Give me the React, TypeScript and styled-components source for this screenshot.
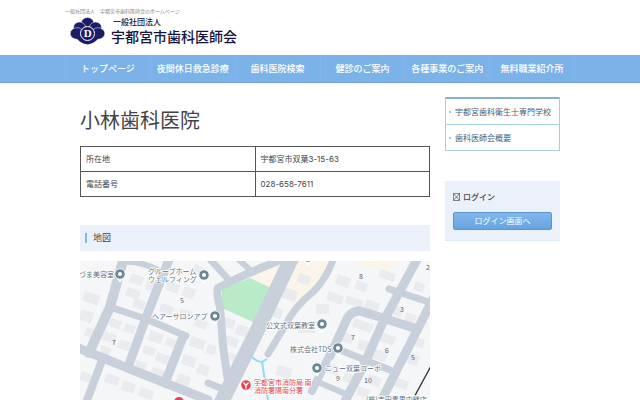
import React from "react";
import styled, { createGlobalStyle } from "styled-components";

const Global = createGlobalStyle`
  * { box-sizing: border-box; }
  body {
    margin: 0;
    background: #fff;
    color: #444;
    font-family: "Noto Sans CJK JP", sans-serif;
    font-size: 9px;
    line-height: 16px;
  }
`;

const Container = styled.div<{ $max: number }>`
  width: 100%;
  max-width: ${(p) => p.$max}px;
  margin: 0 auto;
`;

const Tagline = styled.p`
  margin: 0;
  padding-top: 7px;
  font-size: 5px;
  line-height: 8px;
  color: #888;
`;

const Brand = styled.a`
  display: flex;
  align-items: center;
  gap: 6px;
  height: 40px;
  padding: 0 0 9px 5px;
  color: #14143c;
  text-decoration: none;
`;

const BrandText = styled.span`
  display: flex;
  flex-direction: column;
  font-weight: 500;
`;

const BrandSmall = styled.span`
  padding-left: 2px;
  font-size: 8px;
  line-height: 10px;
`;

const BrandName = styled.span`
  font-size: 14px;
  line-height: 18px;
`;

const Nav = styled.nav`
  background: #7bb2e8;
  border-bottom: 1px solid #6fa5dc;
`;

const NavList = styled.ul`
  display: grid;
  grid-template-columns: repeat(6, minmax(0, 1fr));
  margin: 0;
  padding: 0;
  list-style: none;
  border-left: 1px solid #83b7ea;
`;

const NavItem = styled.li`
  padding: 0 6px;
  border-right: 1px solid #83b7ea;
`;

const NavLink = styled.a`
  display: block;
  overflow: hidden;
  color: #fff;
  font-size: 9px;
  font-weight: 500;
  line-height: 27px;
  text-align: center;
  text-decoration: none;
  white-space: nowrap;
`;

const Columns = styled(Container)`
  display: grid;
  grid-template-columns: minmax(0, 1fr) 115px;
  gap: 15px;
  align-items: start;
  padding-top: 14px;
`;

const Title = styled.h1`
  margin: 9px 0 12px;
  color: #444;
  font-size: 20px;
  font-weight: 400;
  line-height: 28px;
`;

const Table = styled.table`
  width: 100%;
  table-layout: fixed;
  border-collapse: collapse;
  font-family: Inter, "Noto Sans CJK JP", sans-serif;
  font-size: 8px;
  line-height: 14px;
`;

const cell = `
  height: 25px;
  padding: 5px;
  border: 1px solid #555;
  text-align: left;
  font-weight: 400;
`;
const HeadCell = styled.th`${cell}`;
const DataCell = styled.td`${cell}`;

const SectionTitle = styled.h2`
  display: flex;
  align-items: center;
  gap: 6px;
  height: 26px;
  margin: 28px 0 10px;
  padding-left: 5px;
  background: #eaf1fb;
  font-size: 9px;
  font-weight: 400;
  &::before {
    content: "";
    width: 2px;
    height: 10px;
    background: #7db8e0;
  }
`;

const MapDrawing = styled.svg`
  display: block;
  width: 100%;
  height: auto;
  font-family: "Noto Sans CJK JP", sans-serif;
`;

const SideMenu = styled.ul`
  margin: 0 0 30px;
  padding: 0;
  list-style: none;
  border: 1px solid #a9cbe6;
  border-top: 2px solid #86afd6;
`;

const SideItem = styled.li`
  & + & { border-top: 1px solid #a9d3e6; }
`;

const SideLink = styled.a`
  display: flex;
  align-items: center;
  gap: 4px;
  height: 25px;
  padding-left: 3px;
  color: #456078;
  font-size: 8px;
  text-decoration: none;
  white-space: nowrap;
  &::before {
    content: "";
    width: 2px;
    height: 2px;
    background: #a8c4dc;
  }
`;

const LoginPanel = styled.section`
  padding: 8px 8px 10px;
  background: #eaf1fa;
  border-bottom: 1px solid #dde7f1;
`;

const LoginTitle = styled.h2`
  display: flex;
  align-items: center;
  gap: 3px;
  margin: 0 0 7px;
  font-size: 8px;
  font-weight: 500;
  line-height: 16px;
`;

const LoginButton = styled.button`
  display: block;
  width: 100%;
  height: 18px;
  padding: 0;
  border: 1px solid #5c95cf;
  border-radius: 2px;
  background: linear-gradient(#80b7ed, #67a4e0);
  color: #fff;
  font: 400 8px/14px "Noto Sans CJK JP", sans-serif;
`;

const Crest = () => (
  <svg width="35" height="28" viewBox="0 0 35 28" aria-hidden="true">
    <g fill="#1c1c68" stroke="#fff" strokeWidth="0.5">
      <circle cx="17.5" cy="7" r="6.6" />
      <ellipse cx="9.5" cy="10.5" rx="6" ry="5.6" />
      <ellipse cx="25.5" cy="10.5" rx="6" ry="5.6" />
      <ellipse cx="7" cy="16.5" rx="6.8" ry="5.8" />
      <ellipse cx="28" cy="16.5" rx="6.8" ry="5.8" />
    </g>
    <path d="M6 20Q9 26 17.5 27.5 26 26 29 20Z" fill="#1c1c68" />
    <circle cx="17.5" cy="16.5" r="7" fill="#1c1c68" stroke="#fff" strokeWidth="1" />
    <text x="17.7" y="20.3" fill="#fff" fontFamily="Liberation Serif, serif" fontWeight="700" fontSize="11" textAnchor="middle">D</text>
  </svg>
);

const MissingGlyph = () => (
  <svg width="7" height="8" viewBox="0 0 7 8" fill="none" stroke="#555" strokeWidth="0.7" aria-hidden="true">
    <path d="M.5.5h6v7h-6zM.5.5l6 7M6.5.5l-6 7" />
  </svg>
);

const roads: [number, string][] = [
  [10, "M44-4L30 46 9 92"],
  [9, "M90-4L67 54 48 106"],
  [6, "M42 1Q58-1 78 9"],
  [7, "M30 46L66 58 106 75"],
  [9, "M103 76L85 122"],
  [9, "M-4 86L60 112 128 139"],
  [8, "M21 102L6 142"],
  [15, "M213-6L177 70 140 144"],
  [8, "M203-2Q160 15 138 27 136 32 140 46L143 85 148 120"],
  [7, "M128-4L148 18"],
  [6, "M157-3L170 9"],
  [7, "M254-4Q247 17 234 30 214 46 205 65L188 93"],
  [7, "M128 122L148 130"],
  [9, "M339-5L303 61 283 106 263 144"],
  [9, "M355 34L300 142"],
  [7, "M309 28L352 42"],
  [9, "M250 95L266 60Q270 50 280 50L303 57 334 67"],
  [7, "M260 89L310 109"],
  [6, "M238 121L268 134"],
  [8, "M251 91L232 130"],
];

const buildings: [number, number, number, number, number][] = [
  [52, 12, 13, 9, 20], [68, 18, 10, 10, 20], [48, 26, 14, 9, 20], [55, 37, 12, 9, 20],
  [5, 30, 16, 10, 18], [2, 48, 13, 11, 18], [7, 66, 9, 9, 18],
  [31, 57, 12, 8, 20], [46, 62, 11, 8, 20], [25, 70, 13, 9, 20], [40, 78, 12, 9, 20], [22, 84, 10, 8, 20],
  [71, 69, 14, 10, 20], [87, 76, 12, 8, 20], [65, 84, 12, 8, 20], [78, 91, 13, 9, 20], [57, 99, 11, 8, 20], [73, 106, 13, 8, 20],
  [88, 20, 13, 9, 20], [105, 25, 12, 10, 20], [82, 42, 13, 9, 20], [101, 47, 12, 9, 20], [116, 57, 13, 8, 20],
  [112, 75, 15, 10, 20], [128, 83, 9, 9, 15], [104, 93, 14, 10, 20], [119, 102, 12, 10, 20], [99, 112, 13, 10, 20],
  [115, 3, 13, 8, 25], [145, 56, 12, 9, 20], [158, 63, 12, 10, 20], [146, 74, 14, 9, 20], [150, 91, 10, 8, 20],
  [27, 112, 14, 9, 20], [44, 119, 13, 10, 20], [61, 126, 14, 9, 20], [2, 110, 11, 9, 20],
  [205, 26, 14, 11, 20], [220, 12, 12, 9, 20], [195, 46, 9, 10, 20], [236, 43, 13, 10, 0], [218, 62, 17, 10, 0], [198, 104, 15, 10, 15],
  [258, 13, 14, 10, 20], [277, 19, 12, 9, 20], [249, 30, 16, 9, 20], [267, 34, 18, 8, 20], [287, 38, 14, 9, 20], [301, 8, 16, 8, 20],
  [314, 44, 10, 9, 20], [327, 51, 11, 10, 20], [336, 20, 10, 9, 20], [275, 57, 20, 9, 20], [264, 71, 11, 9, 20], [280, 78, 11, 10, 20],
  [302, 71, 15, 9, 20], [294, 87, 15, 10, 20], [334, 75, 12, 9, 20], [327, 91, 14, 10, 20], [248, 102, 14, 9, 20],
  [265, 111, 10, 9, 20], [289, 113, 14, 9, 20], [279, 125, 12, 9, 20], [316, 116, 14, 9, 20], [165, 120, 16, 9, 0], [206, 122, 18, 9, 0],
];

const blockNumbers: [string, number, number][] = [
  ["7", 34, 84], ["5", 102, 42], ["8", 281, 18], ["3", 322, 51], ["2", 348, 9],
  ["7", 273, 79], ["6", 307, 92], ["5", 333, 99], ["9", 258, 120], ["10", 288, 122],
];

const places: [string, number, number][] = [
  ["づま美容室", -1, 16], ["グループホーム", 68, 13], ["ウェルフィング", 68, 21],
  ["ヘアーサロンアプ", 72, 58], ["公文式双葉教室", 186, 67], ["株式会社TDS", 210, 91],
  ["ニュー双葉コーポ", 245, 110], ["(株)吉田青果中継店", 286, 141],
];

const pins: [number, number][] = [[40, 13], [124, 14], [135, 55], [242, 63], [258, 87], [237, 107], [228, -4]];

const AreaMap = () => (
  <MapDrawing viewBox="0 0 350 139" role="img" aria-label="小林歯科医院周辺の地図">
    <rect width="350" height="139" fill="#f5f6f8" />
    <g fill="#fbf4e8">
      <path d="M168 16L200 4 202 9 190 28ZM218 0H250L238 22 217 42 204 38ZM270 0H318L310 9 287 7Z" />
    </g>
    <g fill="#e9ebee">
      {buildings.map(([x, y, w, h, r], i) => (
        <rect key={i} x={x} y={y} width={w} height={h} transform={`rotate(${r} ${x} ${y})`} />
      ))}
    </g>
    <path d="M142 28L170 17 191 27 175 62 142 47Z" fill="#b9ebc9" />
    <g fill="none" stroke="#c7d0db" strokeLinecap="round" strokeLinejoin="round">
      {roads.map(([w, d]) => <path key={d} d={d} strokeWidth={w} />)}
    </g>
    <path d="M172 96Q177 101 182 101L187 98M182 101L188 139" fill="none" stroke="#8fdcee" strokeWidth="2" />
    <path d="M351 105L332 140" stroke="#333" strokeWidth="1.3" />
    <g fill="#5c6670" fontSize="7" textAnchor="middle">
      {blockNumbers.map(([t, x, y], i) => <text key={i} x={x} y={y}>{t}</text>)}
    </g>
    <g fill="#5f7080" stroke="#fff" strokeWidth="1.5" paintOrder="stroke" fontSize="7">
      {places.map(([t, x, y]) => <text key={t} x={x} y={y}>{t}</text>)}
    </g>
    {pins.map(([x, y], i) => (
      <g key={i}>
        <path d={`M${x - 5} ${y + 2}L${x} ${y + 9} ${x + 5} ${y + 2}Z`} fill="#fff" />
        <circle cx={x} cy={y} r="5.2" fill="#6c8793" stroke="#fff" strokeWidth="0.8" />
        <circle cx={x} cy={y} r="2.1" fill="#fff" />
      </g>
    ))}
    <path d="M162 127L166 134 171 127Z" fill="#fff" />
    <circle cx="166" cy="124" r="5.2" fill="#e6454f" stroke="#fff" strokeWidth="0.8" />
    <path d="M163.5 121.5L166 124.5 168.5 121.5M166 124.5V127.5" fill="none" stroke="#fff" strokeWidth="1.4" />
    <circle cx="99" cy="141" r="5" fill="#e6454f" />
    <g fill="#df4551" stroke="#fff" strokeWidth="1.5" paintOrder="stroke" fontSize="7">
      <text x="174" y="124">宇都宮市消防局 南</text>
      <text x="174" y="132">消防署陽南分署</text>
    </g>
  </MapDrawing>
);

const navItems = ["トップページ", "夜間休日救急診療所", "歯科医院検索", "健診のご案内", "各種事業のご案内", "無料職業紹介所"];
const sideItems = ["宇都宮歯科衛生士専門学校", "歯科医師会概要"];
const details = [["所在地", "宇都宮市双葉3-15-63"], ["電話番号", "028-658-7611"]];

export default function App() {
  return (
    <>
      <Global />
      <header>
        <Container $max={510}>
          <Tagline>一般社団法人　宇都宮市歯科医師会のホームページ</Tagline>
          <Brand href="#">
            <Crest />
            <BrandText>
              <BrandSmall>一般社団法人</BrandSmall>
              <BrandName>宇都宮市歯科医師会</BrandName>
            </BrandText>
          </Brand>
        </Container>
        <Nav>
          <Container $max={510}>
            <NavList>
              {navItems.map((t) => <NavItem key={t}><NavLink href="#">{t}</NavLink></NavItem>)}
            </NavList>
          </Container>
        </Nav>
      </header>
      <Columns $max={480}>
        <main>
          <Title>小林歯科医院</Title>
          <Table>
            <tbody>
              {details.map(([k, v]) => (
                <tr key={k}><HeadCell scope="row">{k}</HeadCell><DataCell>{v}</DataCell></tr>
              ))}
            </tbody>
          </Table>
          <SectionTitle>地図</SectionTitle>
          <AreaMap />
        </main>
        <aside>
          <SideMenu>
            {sideItems.map((t) => <SideItem key={t}><SideLink href="#">{t}</SideLink></SideItem>)}
          </SideMenu>
          <LoginPanel>
            <LoginTitle><MissingGlyph />ログイン</LoginTitle>
            <LoginButton type="button">ログイン画面へ</LoginButton>
          </LoginPanel>
        </aside>
      </Columns>
    </>
  );
}
